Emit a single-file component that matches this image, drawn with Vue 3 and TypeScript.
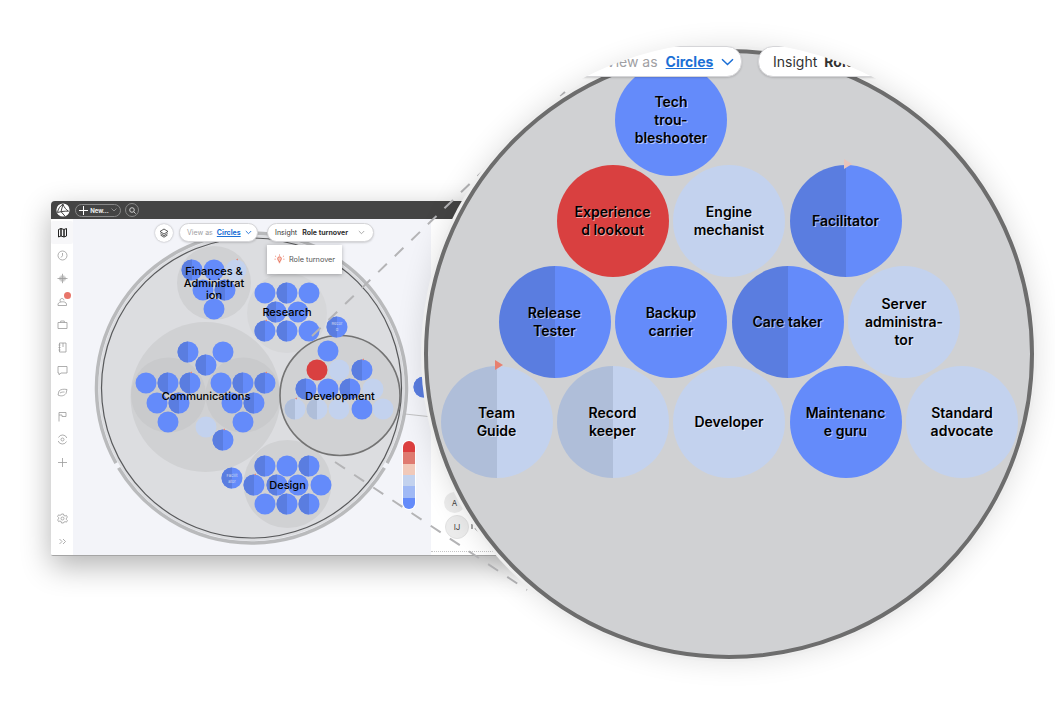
<template>
  <div class="stage">
    <div class="window">
      <header class="titlebar">
        <svg class="logo" width="14" height="14" viewBox="0 0 14 14">
          <circle cx="7" cy="7" r="6.600" fill="#fff" />
          <path d="M1.500 9.500C2 6 4 3 7 1.200c1 3 3 5.500 5.500 7C9 8 5 8.500 1.500 9.500zM7 1.200 5 8.600l4 4.600" fill="none" stroke="#444" stroke-width="1" />
        </svg>
        <div class="new-btn">
          <svg width="9" height="9" viewBox="0 0 9 9"><path d="M4.500 0v9M0 4.500h9" stroke="#fff" stroke-width="1" /></svg>
          <span>New...</span>
          <svg width="6" height="4" viewBox="0 0 6 4"><path d="M.5.500 3 3 5.500.500" fill="none" stroke="#aaa" stroke-width=".7" /></svg>
        </div>
        <div class="search-btn">
          <svg width="7" height="7" viewBox="0 0 7 7"><circle cx="3" cy="3" r="2.300" fill="none" stroke="#ddd" stroke-width=".9" /><path d="M4.700 4.700 6.600 6.600" stroke="#ddd" stroke-width=".9" /></svg>
        </div>
      </header>

      <div class="body">
        <nav class="sidebar">
          <div v-for="icon in topIcons" :key="icon.name" :class="['nav-item', { active: icon.name === 'map' }]">
            <svg width="11" height="11" viewBox="0 0 11 11" class="nav-icon" :class="{ dark: icon.name === 'map' }">
              <path :d="icon.d" />
            </svg>
            <span v-if="icon.name === 'person'" class="nav-badge"></span>
          </div>
          <div class="nav-spacer"></div>
          <div v-for="icon in bottomIcons" :key="icon.name" class="nav-item">
            <svg width="11" height="11" viewBox="0 0 11 11" class="nav-icon"><path :d="icon.d" /></svg>
          </div>
        </nav>

        <main class="canvas">
          <svg class="chart" width="358" height="337" viewBox="73 219 358 337">
            <circle cx="251.500" cy="388" r="153" fill="#dcdde0" />
            <path v-for="(d, i) in outerArcs" :key="i" :d="d" fill="none" stroke="#b9babc" stroke-width="3.500" />
            <circle cx="251.500" cy="388" r="150" fill="none" stroke="#58595b" stroke-width="1.200" />

            <circle v-for="g in groups" :key="`${g.x}-${g.y}`" :cx="g.x" :cy="g.y" :r="g.r" :fill="g.fill" />
            <circle cx="340" cy="395.500" r="60" fill="#d0d1d3" stroke="#737373" stroke-width="1.600" />

            <g v-for="(b, i) in miniBubbles" :key="i">
              <circle :cx="b.x" :cy="b.y" r="10.500" :fill="palette[b.kind].light" />
              <path v-if="palette[b.kind].dark" :d="leftHalf(b.x, b.y, 10.500)" :fill="palette[b.kind].dark" />
              <path v-if="b.flag" :d="`M${b.x} ${b.y - 10.500}l2 -1l-.2 2z`" fill="#e8806f" />
            </g>

            <text class="tiny" x="232" y="477"><tspan x="232" dy="0">Facilit</tspan><tspan x="232" dy="6">ator</tspan></text>
            <text class="tiny" x="337" y="325"><tspan x="337" dy="0">Recor</tspan><tspan x="337" dy="6">d</tspan></text>

            <text v-for="l in miniLabels" :key="l.text" class="mini-label" :x="l.x" :y="l.y">{{ l.text }}</text>

            <path d="M405 414 428 416.500" stroke="#b5b5b5" stroke-width=".8" fill="none" />
          </svg>

          <div class="toolbar">
            <div class="layers-btn">
              <svg width="10" height="10" viewBox="0 0 10 10" fill="none" stroke="#333" stroke-width=".8">
                <path d="M5 1 9 3.500 5 6 1 3.500z" /><path d="M1.500 5.500 5 7.700 8.500 5.500" /><path d="M1.500 7 5 9.200 8.500 7" />
              </svg>
            </div>
            <div class="pill view-pill">
              <span class="muted">View as</span>
              <span class="link">Circles</span>
              <svg width="7" height="5" viewBox="0 0 7 5"><path d="M.8 1 3.500 3.700 6.200 1" fill="none" stroke="#1b6fd6" stroke-width=".9" /></svg>
            </div>
            <div class="pill insight-pill">
              <span>Insight</span>
              <b>Role turnover</b>
              <svg width="7" height="5" viewBox="0 0 7 5"><path d="M.8 1 3.500 3.700 6.200 1" fill="none" stroke="#888" stroke-width=".7" /></svg>
            </div>
          </div>

          <div class="menu">
            <svg width="11" height="11" viewBox="0 0 11 11" fill="none" stroke="#e8735c" stroke-width=".9">
              <path d="M3.600 4.700a1.900 1.900 0 1 1 3.800 0c0 1-1 1.500-1.200 2.800H4.800C4.600 6.200 3.600 5.700 3.600 4.700z" fill="#f6c9bd" />
              <path d="M4.800 8.700h1.400M5.500.500v1.100M1.200 2l.9.700M9.800 2l-.9.700M.6 5.200h1M9.400 5.200h1" />
            </svg>
            <span>Role turnover</span>
          </div>

          <div class="legend">
            <span v-for="c in legendColors" :key="c" :style="{ background: c }"></span>
          </div>
        </main>

        <aside class="panel">
          <div class="avatar a">A</div>
          <div class="avatar ij">IJ</div>
          <svg class="panel-mark" width="10" height="10" viewBox="0 0 10 10"><path d="M1 1v5M4 5l3 3" stroke="#8a8a8a" stroke-width="1.500" fill="none" /></svg>
          <div class="panel-foot"></div>
        </aside>
      </div>
    </div>

    <svg class="guides" width="1055" height="710" viewBox="0 0 1055 710">
      <path d="M312 336 565 92" />
      <path d="M335 462 527 590" />
    </svg>

    <div class="lens">
      <div class="lens-clip">
        <div class="lens-ring">
          <div
            v-for="n in lensNodes"
            :key="n.name"
            class="node"
            :style="nodeStyle(n)"
          >
            <span>{{ n.name }}</span>
            <i v-if="n.flag" :class="['node-flag', n.flag]"></i>
          </div>
        </div>
        <div class="pill lens-pill lens-view">
          <span class="muted">View as</span>
          <span class="link">Circles</span>
          <svg width="13" height="8" viewBox="0 0 13 8"><path d="M1 1.200 6.500 6.500 12 1.200" fill="none" stroke="#1b6fd6" stroke-width="1.500" /></svg>
        </div>
        <div class="pill lens-pill lens-insight">
          <span>Insight</span>
          <b>Role turnover</b>
        </div>
      </div>
    </div>
  </div>
</template>

<script setup lang="ts">
type Kind = 'blue' | 'half' | 'light' | 'lightHalf' | 'red';

interface MiniBubble {
  x: number;
  y: number;
  kind: Kind;
  flag?: boolean;
}

interface LensNode {
  name: string;
  x: number;
  y: number;
  kind: Kind;
  flag?: 'flag-red' | 'flag-pale';
}

const palette: Record<Kind, { light: string; dark?: string }> = {
  blue: { light: '#648bfa' },
  half: { light: '#648bfa', dark: '#5a7de0' },
  light: { light: '#c3d2ee' },
  lightHalf: { light: '#c3d2ee', dark: '#afbed9' },
  red: { light: '#d94040' },
};

const legendColors = ['#dc3f3f', '#df7a70', '#f1c9b9', '#c3d2ee', '#a0b9f5', '#648bfa'];

const groups = [
  { x: 214, y: 283, r: 37, fill: '#d0d1d3' },
  { x: 287, y: 313, r: 40, fill: '#d6d7d9' },
  { x: 205.500, y: 397, r: 75, fill: '#d0d1d3' },
  { x: 168.500, y: 395, r: 37.500, fill: '#c9cacc' },
  { x: 243, y: 395, r: 37.500, fill: '#c9cacc' },
  { x: 287.500, y: 484, r: 44, fill: '#d0d1d3' },
];

const miniBubbles: MiniBubble[] = [
  { x: 192, y: 270, kind: 'half' },
  { x: 214, y: 270, kind: 'blue' },
  { x: 236, y: 270, kind: 'light', flag: true },
  { x: 203, y: 290, kind: 'blue' },
  { x: 225, y: 290, kind: 'half' },
  { x: 214, y: 309, kind: 'blue' },

  { x: 265, y: 293, kind: 'blue' },
  { x: 287, y: 293, kind: 'half' },
  { x: 309, y: 293, kind: 'blue' },
  { x: 276, y: 312, kind: 'half' },
  { x: 298, y: 312, kind: 'blue' },
  { x: 265, y: 331, kind: 'half', flag: true },
  { x: 287, y: 331, kind: 'half' },
  { x: 309, y: 331, kind: 'blue' },

  { x: 337, y: 327, kind: 'half' },
  { x: 424, y: 387, kind: 'half' },

  { x: 188, y: 352, kind: 'half' },
  { x: 223, y: 352, kind: 'blue' },
  { x: 206, y: 365, kind: 'half' },
  { x: 146, y: 383, kind: 'blue' },
  { x: 168, y: 383, kind: 'half' },
  { x: 190, y: 383, kind: 'half', flag: true },
  { x: 157, y: 403, kind: 'blue' },
  { x: 179, y: 403, kind: 'half' },
  { x: 168, y: 422, kind: 'blue' },
  { x: 221, y: 383, kind: 'blue' },
  { x: 243, y: 383, kind: 'half' },
  { x: 265, y: 383, kind: 'half', flag: true },
  { x: 232, y: 403, kind: 'blue' },
  { x: 254, y: 403, kind: 'half' },
  { x: 243, y: 422, kind: 'blue' },
  { x: 206, y: 427, kind: 'light' },
  { x: 223, y: 440, kind: 'half', flag: true },

  { x: 232, y: 478, kind: 'half' },

  { x: 265, y: 466, kind: 'half' },
  { x: 287, y: 466, kind: 'blue' },
  { x: 309, y: 466, kind: 'half' },
  { x: 254, y: 485, kind: 'half', flag: true },
  { x: 277, y: 485, kind: 'half' },
  { x: 298, y: 485, kind: 'blue' },
  { x: 321, y: 485, kind: 'blue' },
  { x: 265, y: 504, kind: 'blue' },
  { x: 287, y: 504, kind: 'half' },
  { x: 309, y: 504, kind: 'half' },

  { x: 328, y: 351, kind: 'blue' },
  { x: 317, y: 370, kind: 'red' },
  { x: 339, y: 370, kind: 'light' },
  { x: 362, y: 370, kind: 'half', flag: true },
  { x: 306, y: 389, kind: 'half' },
  { x: 328, y: 389, kind: 'blue' },
  { x: 350, y: 389, kind: 'half' },
  { x: 373, y: 389, kind: 'light' },
  { x: 295, y: 409, kind: 'lightHalf', flag: true },
  { x: 317, y: 409, kind: 'lightHalf' },
  { x: 339, y: 409, kind: 'light' },
  { x: 362, y: 409, kind: 'blue' },
  { x: 383, y: 409, kind: 'light' },
];

const miniLabels = [
  { text: 'Finances &', x: 214, y: 275 },
  { text: 'Administrat', x: 214, y: 287 },
  { text: 'ion', x: 214, y: 299 },
  { text: 'Research', x: 287, y: 316 },
  { text: 'Communications', x: 206, y: 400 },
  { text: 'Development', x: 340, y: 400 },
  { text: 'Design', x: 287.500, y: 489 },
];

const lensNodes: LensNode[] = [
  { name: 'Tech\ntrou-\nbleshooter', x: 671, y: 120, kind: 'blue' },
  { name: 'Experience\nd lookout', x: 612.500, y: 221, kind: 'red' },
  { name: 'Engine\nmechanist', x: 729, y: 221, kind: 'light' },
  { name: 'Facilitator', x: 845.500, y: 221, kind: 'half', flag: 'flag-pale' },
  { name: 'Release\nTester', x: 554.500, y: 321.500, kind: 'half' },
  { name: 'Backup\ncarrier', x: 671, y: 321.500, kind: 'blue' },
  { name: 'Care taker', x: 787.500, y: 321.500, kind: 'half' },
  { name: 'Server\nadministra-\ntor', x: 904, y: 321.500, kind: 'light' },
  { name: 'Team\nGuide', x: 496.500, y: 422, kind: 'lightHalf', flag: 'flag-red' },
  { name: 'Record\nkeeper', x: 612.500, y: 422, kind: 'lightHalf' },
  { name: 'Developer', x: 729, y: 422, kind: 'light' },
  { name: 'Maintenanc\ne guru', x: 845.500, y: 422, kind: 'blue' },
  { name: 'Standard\nadvocate', x: 962, y: 422, kind: 'light' },
];

const topIcons = [
  { name: 'map', d: 'M1.500 2.500 4 1.500v7.500l-2.500 1zM4 1.500l3 1v7.500l-3-1zM7 2.500l2.500-1v7.500l-2.500 1z' },
  { name: 'clock', d: 'M5.500 1a4.500 4.500 0 1 0 0 9 4.500 4.500 0 0 0 0-9zM5.500 3v2.700L4 7.500' },
  { name: 'pulse', d: 'M.5 5.500h10M3 3.700v3.600M4.200 2.500v6M5.500 .8v9.400M6.800 2.500v6M8 3.700v3.600' },
  { name: 'person', d: 'M1 9.500h8.500V8C9 6 7 5.800 5.500 5.800 3.500 5.800 1.500 6.500 1 8zM3.500 5.800a2 2 0 1 1 3.500-1.500' },
  { name: 'case', d: 'M1 3.500h9v6H1zM3.700 3.500V2h3.600v1.500' },
  { name: 'book', d: 'M2.500 1h6.500v9H2.500zM1.500 3h2M1.500 5.500h2M1.500 8h2M6 1v4' },
  { name: 'chat', d: 'M1 1.500h9v6.500H4l-2 1.800V8H1z' },
  { name: 'tag', d: 'M1 7 2 3c2-2 5-2 8-1.500l-1 4C7 8 4 8.500 1 7zM3 5c1.500-1 3-1 4.500-1' },
  { name: 'flag', d: 'M2 10.500V1.500h7v4H5V4H2' },
  { name: 'target', d: 'M1.500 3.500A4.500 4.500 0 0 1 9.800 4M9.500 7.500A4.500 4.500 0 0 1 1.200 7M5.500 4a1.500 1.500 0 1 0 0 3 1.500 1.500 0 0 0 0-3z' },
  { name: 'plus', d: 'M5.500 1v9M1 5.500h9' },
];

const bottomIcons = [
  { name: 'gear', d: 'M4.500 1h2l.3 1.400 1.300.6 1.300-.6 1 1.700-1 1v1.400l1 1-1 1.700-1.300-.6-1.300.6L6.500 10h-2l-.3-1.400-1.300-.6-1.300.6-1-1.700 1-1V4.500l-1-1 1-1.700 1.300.6 1.300-.6zM5.500 4a1.500 1.500 0 1 0 0 3 1.500 1.500 0 0 0 0-3z' },
  { name: 'more', d: 'M2.500 3 5 5.500 2.500 8M6 3l2.500 2.500L6 8' },
];

const leftHalf = (x: number, y: number, r: number) =>
  `M${x} ${y - r}A${r} ${r} 0 0 0 ${x} ${y + r}Z`;

// thick outer band of the map, it breaks at both lower sides
const arc = (from: number, to: number) => {
  const r = 155;
  const pt = (deg: number) => {
    const a = (deg * Math.PI) / 180;
    return `${251.5 + r * Math.cos(a)} ${388 + r * Math.sin(a)}`;
  };
  return `M${pt(from)}A${r} ${r} 0 ${to - from > 180 ? 1 : 0} 1 ${pt(to)}`;
};
const outerArcs = [arc(31, 149), arc(151, 389)];

const nodeStyle = (n: LensNode) => {
  const { light, dark } = palette[n.kind];
  return {
    left: `${n.x - 56 - 428}px`,
    top: `${n.y - 56 - 53}px`,
    background: dark ? `linear-gradient(90deg, ${dark} 50%, ${light} 50%)` : light,
  };
};
</script>

<style>
html,
body {
  margin: 0;
  background: #fff;
}
</style>

<style scoped>
.stage {
  position: relative;
  width: 1055px;
  height: 710px;
  padding: 201px 0 0 51px;
  box-sizing: border-box;
  overflow: hidden;
  background: #fff;
  font-family: Inter, "Liberation Sans", sans-serif;
}

.window {
  width: 480px;
  height: 355px;
  display: flex;
  flex-direction: column;
  border-radius: 4px 4px 2px 2px;
  box-shadow: 0 10px 30px rgba(0, 0, 0, 0.3);
  border-bottom: 1px solid #a5a5a5;
  box-sizing: border-box;
  overflow: hidden;
  background: #f3f4f9;
}

.titlebar {
  height: 18px;
  flex: none;
  background: #444;
  display: flex;
  align-items: center;
  padding-left: 5px;
  gap: 4px;
}

.logo {
  margin-right: 1px;
}

.new-btn {
  height: 13px;
  width: 46px;
  box-sizing: border-box;
  border: 1px solid #888;
  border-radius: 8px;
  display: flex;
  align-items: center;
  justify-content: center;
  gap: 2px;
  color: #eee;
  font-size: 6px;
  font-weight: 700;
}

.search-btn {
  width: 14px;
  height: 14px;
  box-sizing: border-box;
  border: 1px solid #888;
  border-radius: 50%;
  display: flex;
  align-items: center;
  justify-content: center;
}

.body {
  flex: 1;
  display: flex;
  min-height: 0;
}

.sidebar {
  width: 22px;
  flex: none;
  background: #fff;
  display: flex;
  flex-direction: column;
  padding: 2px 0 2px;
  box-sizing: border-box;
}

.nav-item {
  position: relative;
  height: 23px;
  flex: none;
  display: flex;
  align-items: center;
  justify-content: center;
}

.nav-item.active {
  background: #f7f7f9;
  border-radius: 2px;
}

.nav-spacer {
  flex: 1;
}

.nav-icon {
  fill: none;
  stroke: #9a9a9a;
  stroke-width: 0.8;
}

.nav-icon.dark {
  stroke: #222;
  stroke-width: 1;
}

.nav-badge {
  position: absolute;
  right: 2px;
  top: 2px;
  width: 7px;
  height: 7px;
  border-radius: 50%;
  background: #e8756a;
}

.canvas {
  position: relative;
  width: 358px;
  flex: none;
  background: #f3f4f9;
  overflow: hidden;
}

.chart {
  position: absolute;
  left: 0;
  top: 0;
}

.mini-label {
  font-size: 11px;
  font-weight: 500;
  text-anchor: middle;
  fill: #000;
}

.tiny {
  font-size: 4px;
  text-anchor: middle;
  fill: #d5dcf0;
}

.toolbar {
  position: absolute;
  left: 82px;
  top: 4px;
  display: flex;
  align-items: center;
}

.layers-btn {
  width: 18px;
  height: 18px;
  border-radius: 50%;
  background: #fff;
  box-shadow: 0 0 2px rgba(0, 0, 0, 0.35);
  display: flex;
  align-items: center;
  justify-content: center;
  margin-right: 6px;
}

.pill {
  background: #fff;
  border: 1px solid #d5d5d8;
  box-sizing: border-box;
  border-radius: 10px;
  display: flex;
  align-items: center;
  box-shadow: 0 1px 2px rgba(0, 0, 0, 0.15);
  white-space: nowrap;
  color: #333;
}

.view-pill {
  width: 79px;
  height: 19px;
  padding-left: 7px;
  gap: 4px;
  font-size: 7px;
  margin-right: 9px;
}

.insight-pill {
  width: 107px;
  height: 19px;
  padding-left: 7px;
  gap: 5px;
  font-size: 7px;
}

.insight-pill svg {
  margin-left: 5px;
}

.muted {
  color: #a0a0a3;
}

.link {
  color: #1b6fd6;
  font-weight: 700;
  text-decoration: underline;
}

.menu {
  position: absolute;
  left: 194px;
  top: 26px;
  width: 75px;
  height: 29px;
  box-sizing: border-box;
  padding-left: 7px;
  background: #fff;
  box-shadow: 0 1px 4px rgba(0, 0, 0, 0.28);
  display: flex;
  align-items: center;
  gap: 4px;
  font-size: 7.300px;
  color: #555;
  white-space: nowrap;
}

.legend {
  position: absolute;
  left: 330px;
  top: 222px;
  width: 12px;
  height: 68px;
  display: flex;
  flex-direction: column;
  overflow: hidden;
  border-radius: 6px;
  box-shadow: 0 0 0 1px #fff;
}

.legend span {
  flex: 1;
}

.panel {
  flex: 1;
  position: relative;
  background: #fff;
}

.avatar {
  position: absolute;
  border-radius: 50%;
  background: #ececec;
  display: flex;
  align-items: center;
  justify-content: center;
  color: #444;
  font-size: 8px;
}

.avatar.a {
  left: 13px;
  top: 273px;
  width: 21px;
  height: 21px;
}

.avatar.ij {
  left: 14px;
  top: 296px;
  width: 24px;
  height: 24px;
  border: 1px solid #e2e2e2;
  box-sizing: border-box;
}

.panel-mark {
  position: absolute;
  left: 40px;
  top: 304px;
}

.panel-foot {
  position: absolute;
  left: 0;
  right: 0;
  bottom: 3px;
  border-top: 1px dotted #c5c5c5;
}

.guides {
  position: absolute;
  left: 0;
  top: 0;
  pointer-events: none;
}

.guides path {
  fill: none;
  stroke: #b4b4b6;
  stroke-width: 2;
  stroke-dasharray: 12 11;
}

.lens {
  position: absolute;
  left: 421px;
  top: 46px;
  width: 616px;
  height: 616px;
  border-radius: 50%;
  background: #eee;
  box-shadow: 0 0 26px 2px rgba(0, 0, 0, 0.1);
}

.lens-clip {
  position: absolute;
  inset: -4px;
  border-radius: 50%;
  overflow: hidden;
}

.lens-ring {
  position: absolute;
  left: 7px;
  top: 7px;
  width: 610px;
  height: 610px;
  box-sizing: border-box;
  border: 4px solid #6d6d6d;
  border-radius: 50%;
  background: #d0d1d3;
}

.node {
  position: absolute;
  width: 112px;
  height: 112px;
  border-radius: 50%;
  display: flex;
  align-items: center;
  justify-content: center;
  text-align: center;
  font-size: 14px;
  line-height: 18px;
  font-weight: 600;
  color: #000;
  text-shadow: 1px 1px 0 rgba(255, 255, 255, 0.55);
}

.node span {
  width: 96px;
  white-space: pre-line;
}

.node-flag {
  position: absolute;
  left: 54px;
  top: -6px;
  width: 0;
  height: 0;
  border-left: 8px solid #e8806f;
  border-top: 5px solid transparent;
  border-bottom: 5px solid transparent;
}

.node-flag.flag-pale {
  border-left-color: #e9c4bb;
}

.lens-pill {
  position: absolute;
  top: 4px;
  height: 31px;
  border-radius: 15px;
  font-size: 14px;
}

.lens-view {
  left: 153px;
  width: 172px;
  padding-left: 35px;
  gap: 8px;
}

.lens-insight {
  left: 341px;
  width: 240px;
  padding-left: 14px;
  gap: 7px;
}
</style>
